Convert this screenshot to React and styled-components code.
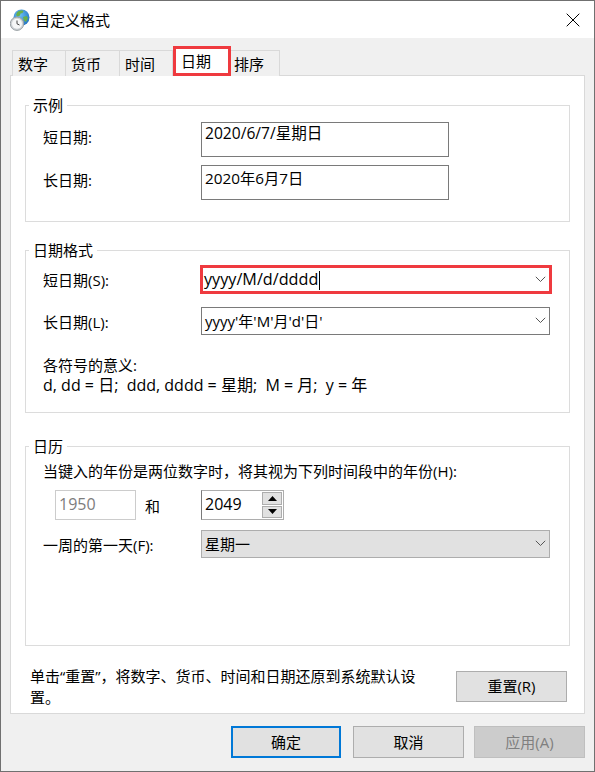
import React from "react";
import styled, { createGlobalStyle } from "styled-components";

const Global = createGlobalStyle`
  html, body { margin: 0; padding: 0; background: #f0f0f0; }
  * { box-sizing: border-box; }
`;
const Win = styled.div`
  width: 595px; height: 772px; background: #f0f0f0; border: 1px solid #707070;
  font-family: "Open Sans", "Noto Sans CJK SC", sans-serif; font-size: 15px; color: #000;
  display: flex; flex-direction: column; overflow: hidden;
`;
const TitleBar = styled.div`
  height: 37px; background: #fff; display: flex; align-items: center; padding: 0 14px 0 9px; gap: 5px;
  flex: none;
`;
const TitleText = styled.div` flex: 1; padding-bottom: 1px; `;
const Tabs = styled.div`
  display: flex; margin: 12px 0 0 11px; height: 26px; flex: none; position: relative; z-index: 1;
`;
const Tab = styled.div`
  height: 26px; width: ${p => p.$w}px; background: #f0f0f0; border: 1px solid #d9d9d9; border-bottom: none;
  border-left-width: ${p => (p.$first ? 1 : 0)}px;
  padding-left: ${p => p.$pl || 5}px; padding-bottom: 1px; display: flex; align-items: center;
`;
const ActiveTab = styled.div`
  height: 30px; width: 58px; margin-top: -4px; background: #fff; border: 3px solid #ef3a3f;
  padding: 0 0 2px 5px; display: flex; align-items: center;
  margin-bottom: -1px;
`;
const Panel = styled.div`
  margin: -1px 9px 0 9px; height: 639px; background: #fff; border: 1px solid #d9d9d9;
  padding: 19px 14px 0 14px; display: flex; flex-direction: column; flex: none;
`;
const Group = styled.fieldset`
  margin: 0 0 ${p => p.$mb}px 0; padding: 0; border: 1px solid #dcdcdc; height: ${p => p.$h}px;
  min-width: 0; position: relative;
`;
const Legend = styled.legend`
  padding: 0 4px; margin-left: 3px; line-height: 20px;
`;
const Body = styled.div`
  margin-top: -10px; padding: ${p => p.$pt}px 0 0 17px; display: flex; flex-direction: column;
`;
const Row = styled.div`
  display: flex; align-items: center; height: ${p => p.$h}px; margin-bottom: ${p => p.$mb || 0}px;
`;
const Label = styled.div` width: 158px; flex: none; padding-bottom: ${p => p.$pb || 0}px; `;
const ReadBox = styled.div`
  width: 248px; height: 35px; border: 1px solid #7a7a7a; padding: 0 0 ${p => p.$pb}px 3px; display: flex; align-items: center;
  font-size: ${p => p.$fs}px;
`;
const Combo = styled.div`
  width: 349px; height: 28px; border: 1px solid ${p => p.$c || "#7a7a7a"};
  background: ${p => p.$bg || "#fff"};
  font-size: ${p => p.$fs || 15}px;
  display: flex; align-items: center; padding: 0 3px 1px 3px; justify-content: space-between;
`;
const HiCombo = styled(Combo)`
  width: 352px; height: 29px; margin-left: -1px; border: 3px solid #ef3a3f; padding: 0 3px 1px 1px;
`;
const Caret = styled.span`
  display: inline-block; width: 1px; height: 19px; background: #000; vertical-align: middle; margin-left: 1px;
`;
const Note = styled.div` line-height: 20px; font-size: ${p => p.$fs || 15}px; margin-top: ${p => p.$mt || 0}px; `;
const Disabled = styled.div`
  width: 81px; height: 30px; margin-left: 12px; border: 1px solid #cccccc; color: #7d7d7d; font-size: 16px;
  display: flex; align-items: center; padding: 0 0 2px 3px;
`;
const And = styled.div` width: 65px; padding-left: 9px; `;
const Spin = styled.div`
  width: 83px; height: 30px; border: 1px solid #adadad; border-left-color: #7a7a7a;
  display: flex; align-items: center; padding-left: 3px; justify-content: space-between; font-size: 16px;
`;
const SpinValue = styled.span` padding-bottom: 3px; `;
const SpinBtns = styled.div`
  width: 20px; height: 26px; margin-right: 1px; display: flex; flex-direction: column; gap: 1px;
`;
const SpinBtn = styled.div`
  flex: 1; background: #e1e1e1; border: 1px solid #adadad; display: flex; align-items: center; justify-content: center;
`;
const Foot = styled.div`
  display: flex; flex: 1; padding: 20px 3px 0 5px; justify-content: space-between; align-items: flex-start;
`;
const FootText = styled.div` width: 395px; line-height: 21px; `;
const Btn = styled.button`
  width: ${p => p.$w || 111}px; height: ${p => p.$h || 32}px; background: ${p => p.$bg || "#e1e1e1"};
  border: ${p => p.$bw || 1}px solid ${p => p.$bc || "#adadad"};
  font: inherit; color: ${p => p.$c || "#000"}; padding: 0 0 2px; margin: ${p => p.$mt || 0}px ${p => p.$mr || 0}px 0 0; flex: none;
`;
const Actions = styled.div`
  display: flex; justify-content: flex-end; padding: 12px 9px 0 0;
`;

const Chev = () => (
  <svg width="11" height="7" viewBox="0 0 11 7"><path d="M.8.8 5.500 5.500 10.200.8" fill="none" stroke="#555" strokeWidth="1" /></svg>
);
const Up = () => <svg width="9" height="5" viewBox="0 0 9 5"><path d="M4.500 0 9 5H0z" fill="#000" /></svg>;
const Down = () => <svg width="9" height="5" viewBox="0 0 9 5"><path d="M0 0h9L4.500 5z" fill="#000" /></svg>;
const GlobeClock = () => (
  <svg width="20" height="22" viewBox="0 0 20 22" style={{ flex: "none" }}>
    <defs>
      <radialGradient id="g" cx=".4" cy=".35" r=".8"><stop offset="0" stopColor="#6cc0f4" /><stop offset="1" stopColor="#1668bd" /></radialGradient>
    </defs>
    <circle cx="11.500" cy="8.500" r="8" fill="url(#g)" />
    <path d="M7 3.500c2-2 5-2.500 6.500-1.500l-1 2-2 .5-.5 2-2.500 1-1.500-1.500zM13 8l3.500-1 1.500 2-2 4-2-1.500z" fill="#69b04a" />
    <circle cx="7" cy="14.700" r="6.700" fill="#cfd3d6" stroke="#9aa0a4" />
    <circle cx="7" cy="14.700" r="5" fill="#f6f7f7" />
    <path d="M7 11.500v3.300l2.500 1.200" fill="none" stroke="#444" strokeWidth="1" />
  </svg>
);
const Close = () => (
  <svg width="14" height="14" viewBox="0 0 14 14"><path d="M.7.7 13.300 13.300M13.300.7.700 13.300" stroke="#000" strokeWidth="1" fill="none" /></svg>
);

export default function App() {
  return (
    <Win>
      <Global />
      <TitleBar>
        <GlobeClock />
        <TitleText>自定义格式</TitleText>
        <Close />
      </TitleBar>
      <Tabs>
        <Tab $w={54} $first>数字</Tab>
        <Tab $w={54}>货币</Tab>
        <Tab $w={53}>时间</Tab>
        <ActiveTab>日期</ActiveTab>
        <Tab $w={49} $pl={3}>排序</Tab>
      </Tabs>
      <Panel>
        <Group $h={127} $mb={18}>
          <Legend>示例</Legend>
          <Body $pt={17}>
            <Row $h={35} $mb={8}><Label $pb={6}>短日期:</Label><ReadBox $pb={14} $fs={15.6}>2020/6/7/星期日</ReadBox></Row>
            <Row $h={35}><Label $pb={6}>长日期:</Label><ReadBox $pb={11} $fs={15.3}>2020年6月7日</ReadBox></Row>
          </Body>
        </Group>
        <Group $h={173} $mb={23}>
          <Legend>日期格式</Legend>
          <Body $pt={15}>
            <Row $h={29} $mb={13}>
              <Label>短日期(S):</Label>
              <HiCombo $fs={16.2}><span>yyyy/M/d/dddd<Caret /></span><Chev /></HiCombo>
            </Row>
            <Row $h={28}>
              <Label>长日期(L):</Label>
              <Combo><span>yyyy'年'M'月'd'日'</span><Chev /></Combo>
            </Row>
            <Note $mt={20}>各符号的意义:</Note>
            <Note $fs={16}>d, dd = 日;&nbsp; ddd, dddd = 星期;&nbsp; M = 月;&nbsp; y = 年</Note>
          </Body>
        </Group>
        <Group $h={210} $mb={0}>
          <Legend>日历</Legend>
          <Body $pt={13}>
            <Row $h={22} $mb={9}>当键入的年份是两位数字时，将其视为下列时间段中的年份(H):</Row>
            <Row $h={30} $mb={10}>
              <Disabled>1950</Disabled>
              <And>和</And>
              <Spin><SpinValue>2049</SpinValue><SpinBtns><SpinBtn><Up /></SpinBtn><SpinBtn><Down /></SpinBtn></SpinBtns></Spin>
            </Row>
            <Row $h={28}>
              <Label>一周的第一天(F):</Label>
              <Combo $bg="#e1e1e1" $c="#adadad"><span>星期一</span><Chev /></Combo>
            </Row>
          </Body>
        </Group>
        <Foot>
          <FootText>单击“重置”，将数字、货币、时间和日期还原到系统默认设置。</FootText>
          <Btn $h={31} $mt={5}>重置(R)</Btn>
        </Foot>
      </Panel>
      <Actions>
        <Btn $w={110} $bc="#0078d7" $bw={2} $mr={12}>确定</Btn>
        <Btn $mr={10}>取消</Btn>
        <Btn $bg="#cccccc" $bc="#bfbfbf" $c="#7f7f7f">应用(A)</Btn>
      </Actions>
    </Win>
  );
}
